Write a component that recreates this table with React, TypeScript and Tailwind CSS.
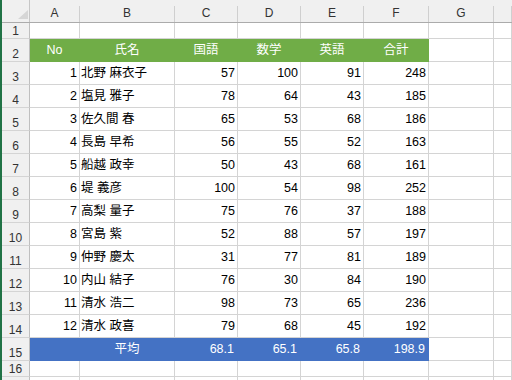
import type { ReactNode } from 'react';

type Row = { no: number; name: string; jp: number; math: number; en: number; total: number };

const ROWS: Row[] = [
  { no: 1, name: '北野 麻衣子', jp: 57, math: 100, en: 91, total: 248 },
  { no: 2, name: '塩見 雅子', jp: 78, math: 64, en: 43, total: 185 },
  { no: 3, name: '佐久間 春', jp: 65, math: 53, en: 68, total: 186 },
  { no: 4, name: '長島 早希', jp: 56, math: 55, en: 52, total: 163 },
  { no: 5, name: '船越 政幸', jp: 50, math: 43, en: 68, total: 161 },
  { no: 6, name: '堤 義彦', jp: 100, math: 54, en: 98, total: 252 },
  { no: 7, name: '高梨 量子', jp: 75, math: 76, en: 37, total: 188 },
  { no: 8, name: '宮島 紫', jp: 52, math: 88, en: 57, total: 197 },
  { no: 9, name: '仲野 慶太', jp: 31, math: 77, en: 81, total: 189 },
  { no: 10, name: '内山 結子', jp: 76, math: 30, en: 84, total: 190 },
  { no: 11, name: '清水 浩二', jp: 98, math: 73, en: 65, total: 236 },
  { no: 12, name: '清水 政喜', jp: 79, math: 68, en: 45, total: 192 },
];

const COLS = ['A', 'B', 'C', 'D', 'E', 'F', 'G', ''];

const GRID = 'grid shrink-0 grid-cols-[28px_50px_95px_63px_63px_63px_65px_65px_1fr]';
const FONT = "font-['Liberation_Sans','Noto_Sans_CJK_JP',sans-serif]";

function RowHead({ n }: { n?: number | string }) {
  return (
    <div className="flex items-end justify-center bg-[#f0f0f0] border-r border-b border-r-[#bfbfbf] border-b-[#d4d4d4] text-[12px] leading-[14px] text-[#333]">
      {n}
    </div>
  );
}

function Cell({ children, className = '' }: { children?: ReactNode; className?: string }) {
  return (
    <div className={`flex items-center overflow-hidden whitespace-nowrap border-r border-b ${className}`}>
      {children}
    </div>
  );
}

const plain = 'border-[#d4d4d4] text-black';
const green = 'bg-[#70ad47] border-[#70ad47] text-white justify-center';
const blue = 'bg-[#4472c4] border-[#4472c4] text-white';

function EmptyRow({ n, h }: { n?: number | string; h: string }) {
  return (
    <div className={`${GRID} ${h}`}>
      <RowHead n={n} />
      {COLS.map((c, i) => (
        <Cell key={i} className={plain} />
      ))}
    </div>
  );
}

export default function App() {
  return (
    <div className={`flex h-[380px] w-[512px] overflow-hidden bg-white text-[12.5px] leading-[14px] ${FONT}`}>
      <div className="w-[2px] shrink-0 bg-[#217346]" />
      <div className="flex-1 flex flex-col">
        {/* column letters */}
        <div className={`${GRID} h-[23px] bg-[#f0f0f0] border-b border-[#ababab]`}>
          <div className="relative border-r border-[#c6c6c6]">
            <svg width="10" height="9" viewBox="0 0 10 9" className="absolute left-[16px] top-[10px]">
              <polygon points="10,0 10,9 0,9" fill="#d6d6d6" />
            </svg>
          </div>
          {COLS.map((c, i) => (
            <div key={i} className="flex">
              <div className="flex-1 flex items-end justify-center pb-[2px] text-[12px] text-[#333]">{c}</div>
              <div className="w-px h-[16px] self-end bg-[#cfcfcf]" />
            </div>
          ))}
        </div>

        <EmptyRow n={1} h="h-[16px]" />

        {/* table header */}
        <div className={`${GRID} h-[23px]`}>
          <RowHead n={2} />
          <Cell className={green}>No</Cell>
          <Cell className={green}>氏名</Cell>
          <Cell className={green}>国語</Cell>
          <Cell className={green}>数学</Cell>
          <Cell className={green}>英語</Cell>
          <Cell className={green}>合計</Cell>
          <Cell className={plain} />
          <Cell className={plain} />
        </div>

        {ROWS.map((r, i) => (
          <div key={r.no} className={`${GRID} h-[23px]`}>
            <RowHead n={i + 3} />
            <Cell className={`${plain} justify-end pr-[2px]`}>{r.no}</Cell>
            <Cell className={`${plain} pl-[1px]`}>{r.name}</Cell>
            <Cell className={`${plain} justify-end pr-[2px]`}>{r.jp}</Cell>
            <Cell className={`${plain} justify-end pr-[2px]`}>{r.math}</Cell>
            <Cell className={`${plain} justify-end pr-[2px]`}>{r.en}</Cell>
            <Cell className={`${plain} justify-end pr-[2px]`}>{r.total}</Cell>
            <Cell className={plain} />
            <Cell className={plain} />
          </div>
        ))}

        {/* averages */}
        <div className={`${GRID} h-[23px]`}>
          <RowHead n={15} />
          <Cell className={blue} />
          <Cell className={`${blue} justify-center`}>平均</Cell>
          <Cell className={`${blue} justify-end pr-[3px]`}>68.1</Cell>
          <Cell className={`${blue} justify-end pr-[3px]`}>65.1</Cell>
          <Cell className={`${blue} justify-end pr-[3px]`}>65.8</Cell>
          <Cell className={`${blue} justify-end pr-[3px]`}>198.9</Cell>
          <Cell className={plain} />
          <Cell className={plain} />
        </div>

        <EmptyRow n={16} h="h-[16px]" />
        <EmptyRow h="h-[16px]" />
      </div>
    </div>
  );
}
